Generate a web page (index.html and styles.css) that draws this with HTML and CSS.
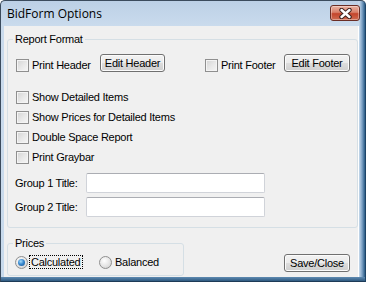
FILE: index.html
```html
<!DOCTYPE html>
<html>
<head>
<meta charset="utf-8">
<link rel="stylesheet" href="styles.css">
</head>
<body>
<div class="window">
  <div class="titlebar">
    <span class="title">BidForm Options</span>
    <span class="close">
      <svg width="13" height="11" viewBox="0 0 13 11">
        <path d="M2.5 2 L10.5 9 M10.5 2 L2.5 9" stroke="#3d2320" stroke-width="4.4" stroke-linecap="round"/>
        <path d="M2.5 2 L10.5 9 M10.5 2 L2.5 9" stroke="#ffffff" stroke-width="2.4" stroke-linecap="round"/>
      </svg>
    </span>
  </div>
  <div class="client">
    <fieldset class="group report">
      <legend>Report Format</legend>
      <div class="header-row">
        <label class="check lead"><span class="box"></span>Print Header</label>
        <span class="btn edit-header">Edit Header</span>
        <label class="check footer"><span class="box"></span>Print Footer</label>
        <span class="btn edit-footer">Edit Footer</span>
      </div>
      <div class="checks">
        <label class="check"><span class="box"></span>Show Detailed Items</label>
        <label class="check"><span class="box"></span>Show Prices for Detailed Items</label>
        <label class="check"><span class="box"></span>Double Space Report</label>
        <label class="check"><span class="box"></span>Print Graybar</label>
      </div>
      <div class="fields">
        <div class="field"><span class="field-label">Group 1 Title:</span><span class="input"></span></div>
        <div class="field"><span class="field-label">Group 2 Title:</span><span class="input"></span></div>
      </div>
    </fieldset>
    <div class="bottom">
      <fieldset class="group prices">
        <legend>Prices</legend>
        <div class="radios">
          <label class="radio"><span class="dot on"></span><span class="focus">Calculated</span></label>
          <label class="radio second"><span class="dot"></span>Balanced</label>
        </div>
      </fieldset>
      <span class="btn save">Save/Close</span>
    </div>
  </div>
</div>
</body>
</html>
```
FILE: styles.css
```css
* { box-sizing: border-box; }
html, body { margin: 0; padding: 0; }
body {
  font-family: "Liberation Sans", Arial, sans-serif;
  font-size: 11px;
  letter-spacing: -0.25px;
  color: #000;
  background: #fff;
}
.window {
  width: 366px;
  height: 282px;
  display: flex;
  flex-direction: column;
  border: 1px solid #3b4b5d;
  border-bottom-color: #1d3b57;
  border-right-color: #1d4468;
  border-radius: 5px 5px 0 0;
  padding: 0 7px 4px 3px;
  background:
    linear-gradient(to top, #2f5a80 0, #5f8bb2 4px, rgba(0,0,0,0) 4px),
    linear-gradient(to left, #2a5b86 0, #7fa3c6 3px, #c9dbec 6px, rgba(0,0,0,0) 7px),
    linear-gradient(to bottom, #bcd0e6 0, #cadbed 25px, #c8daec 100%);
}
.titlebar {
  height: 25px;
  display: flex;
  align-items: flex-start;
  justify-content: space-between;
}
.title {
  font-family: "Open Sans", "Noto Sans", sans-serif;
  font-size: 12px;
  letter-spacing: 0;
  line-height: 16px;
  margin: 5px 0 0 3px;
  color: #000;
}
.close {
  width: 30px;
  height: 16px;
  margin: 4px -2px 0 0;
  border: 1px solid #6a2d25;
  border-radius: 3px;
  background: linear-gradient(to bottom, #eab3a3 0, #d9806a 45%, #c4452c 55%, #cf6c52 100%);
  box-shadow: inset 0 0 0 1px rgba(255,255,255,0.35);
  display: flex;
  align-items: center;
  justify-content: center;
}
.client {
  flex: 1;
  background: #f0f0f0;
  padding: 7px 0 0 3px;
  display: flex;
  flex-direction: column;
  box-shadow: 1px 0 0 #ffffff;
}
fieldset.group {
  margin: 0;
  border: 1px solid #d5dfe5;
  border-radius: 3px;
  min-width: 0;
}
legend {
  padding: 0 2px;
  line-height: 13px;
  height: 13px;
}
.report {
  padding: 8px 7px 10px 8px;
}
.report legend { margin-left: -3px; }
.header-row {
  display: flex;
  align-items: flex-start;
  height: 18px;
}
.check {
  display: flex;
  align-items: center;
  height: 20px;
  white-space: nowrap;
}
.header-row .check {
  height: 18px;
  margin-top: 2px;
}
.lead { width: 84px; }
.footer { width: 79px; margin-left: auto; }
.box {
  width: 13px;
  height: 13px;
  flex: none;
  margin-right: 3px;
  border: 1px solid #8f8f8f;
  background: linear-gradient(135deg, #d3d3d3 0, #e9e9e9 55%, #f6f6f6 100%);
  box-shadow: inset 0 0 0 1px #f4f4f4;
}
.btn {
  display: flex;
  align-items: center;
  justify-content: center;
  height: 18px;
  border: 1px solid #707070;
  border-radius: 3px;
  background: linear-gradient(to bottom, #f2f2f2 0, #ebebeb 50%, #dddddd 50%, #cfcfcf 100%);
  box-shadow: inset 0 0 0 1px #fbfbfb;
  white-space: nowrap;
}
.edit-header { width: 65px; }
.edit-footer { width: 66px; }
.checks {
  margin-top: 15px;
  display: flex;
  flex-direction: column;
}
.fields {
  margin-top: 6px;
  display: flex;
  flex-direction: column;
  gap: 4px;
}
.field {
  display: flex;
  align-items: center;
  height: 20px;
}
.field-label {
  width: 71px;
  margin-left: -1px;
  padding-right: 1px;
}
.input {
  width: 179px;
  height: 20px;
  background: #fff;
  border: 1px solid #d0d3d9;
  border-top-color: #abadb3;
  border-radius: 2px;
}
.bottom {
  margin-top: 9px;
  display: flex;
  align-items: flex-end;
}
.prices {
  width: 177px;
  padding: 5px 6px 6px 7px;
}
.prices legend { margin-left: -2px; }
.radios {
  display: flex;
  align-items: center;
  height: 14px;
}
.radio {
  display: flex;
  align-items: center;
  white-space: nowrap;
}
.second { margin-left: 16px; }
.dot {
  width: 13px;
  height: 13px;
  flex: none;
  border-radius: 50%;
  border: 1px solid #8f8f8f;
  background: radial-gradient(circle at 40% 35%, #ffffff 0, #e4e4e4 55%, #c9c9c9 100%);
  margin-right: 3px;
  display: flex;
  align-items: center;
  justify-content: center;
}
.dot.on { margin-right: 1px; }
.dot.on::after {
  content: "";
  width: 7px;
  height: 7px;
  border-radius: 50%;
  background: radial-gradient(circle at 40% 35%, #a6dcfb 0, #3a8ad0 45%, #144f8f 100%);
}
.focus {
  padding: 0 1px;
  border: 1px dotted #000;
  line-height: 12px;
  width: 54px;
}
.save {
  width: 66px;
  margin: 0 8px 4px auto;
}
```
